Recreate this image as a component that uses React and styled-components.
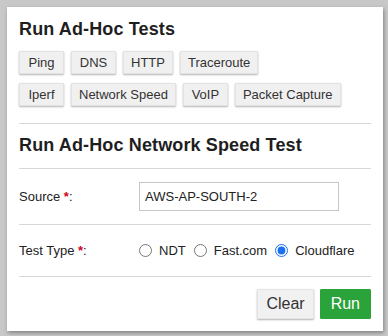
import React, {useState} from 'react';
import styled, {createGlobalStyle} from "styled-components";

const GlobalStyle = createGlobalStyle`
  html, body {
    margin: 0;
    padding: 0;
    background: #c8c8c8;
  }
  body {
    font-family: "Liberation Sans", Arial, Helvetica, sans-serif;
    color: #222;
  }
`;

const testRows = [
    ["Ping", "DNS", "HTTP", "Traceroute"],
    ["Iperf", "Network Speed", "VoIP", "Packet Capture"],
];
const types = ["NDT", "Fast.com", "Cloudflare"];

const App = () => {
    const [testType, setTestType] = useState("Cloudflare");
    const [source, setSource] = useState("AWS-AP-SOUTH-2");

    return (
        <>
            <GlobalStyle/>
            <Page>
                <Panel>
                    <Title>Run Ad-Hoc Tests</Title>
                    <TestGrid>
                        {testRows.map((row, i) => (
                            <TestRow key={i}>
                                {row.map((t) => (
                                    <TestButton key={t}>{t}</TestButton>
                                ))}
                            </TestRow>
                        ))}
                    </TestGrid>
                    <Divider $top={17}/>
                    <Title $top={10}>Run Ad-Hoc Network Speed Test</Title>
                    <Divider $top={12}/>
                    <FormRow $height={55}>
                        <Label>Source <Req>*</Req>:</Label>
                        <TextInput value={source} onChange={(e) => setSource(e.target.value)}/>
                    </FormRow>
                    <Divider/>
                    <FormRow $height={51}>
                        <Label>Test Type <Req>*</Req>:</Label>
                        <Radios>
                            {types.map((t) => (
                                <RadioLabel key={t}>
                                    <input
                                        type="radio"
                                        name="type"
                                        checked={testType === t}
                                        onChange={() => setTestType(t)}
                                    />
                                    {t}
                                </RadioLabel>
                            ))}
                        </Radios>
                    </FormRow>
                    <Divider/>
                    <Footer>
                        <ActionButton>Clear</ActionButton>
                        <ActionButton $primary>Run</ActionButton>
                    </Footer>
                </Panel>
            </Page>
        </>
    );
};

const Page = styled.div`
  padding: 7px;
  width: 388px;
  height: 336px;
  box-sizing: border-box;
`;

const Panel = styled.div`
  width: 376px;
  height: 324px;
  box-sizing: border-box;
  background: #fff;
  padding: 11px 12px 0 12px;
  box-shadow: 1px 2px 4px rgba(0, 0, 0, 0.35);
  display: flex;
  flex-direction: column;
`;

const Title = styled.h2`
  margin: ${(p) => p.$top || 0}px 0 0 0;
  font-size: 18px;
  font-weight: bold;
  line-height: 22px;
  color: #1e1e1e;
  letter-spacing: 0.13px;
`;

const TestGrid = styled.div`
  display: flex;
  flex-direction: column;
  gap: 9px;
  margin-top: 11px;
`;

const TestRow = styled.div`
  display: flex;
  gap: 7px;
`;

const TestButton = styled.button`
  font-family: inherit;
  font-size: 13px;
  height: 23px;
  padding: 0 7px;
  min-width: 45px;
  background: #f0f0f0;
  color: #333;
  border: 1px solid #e2e2e2;
  border-radius: 1px;
  box-shadow: 0 1px 2px rgba(0, 0, 0, 0.3);
  cursor: pointer;
`;

const Divider = styled.hr`
  border: none;
  border-top: 1px solid #d8d8d8;
  margin: ${(p) => p.$top || 0}px 0 0 0;
  width: 100%;
  flex-shrink: 0;
`;

const FormRow = styled.div`
  display: flex;
  align-items: center;
  height: ${(p) => p.$height}px;
  box-sizing: border-box;
`;

const Label = styled.div`
  width: 120px;
  font-size: 13px;
  color: #222;
`;

const Req = styled.span`
  color: #d0021b;
  font-weight: bold;
`;

const TextInput = styled.input`
  width: 200px;
  height: 29px;
  box-sizing: border-box;
  border: 1px solid #c6c6c6;
  padding: 0 5px;
  font-family: inherit;
  font-size: 13px;
  color: #222;
  outline: none;
`;

const Radios = styled.div`
  display: flex;
  align-items: center;
  gap: 8px;
`;

const RadioLabel = styled.label`
  display: flex;
  align-items: center;
  gap: 4px;
  font-size: 13px;
  color: #222;

  input {
    margin: 0 3px 0 0;
    width: 13px;
    height: 13px;
    accent-color: #1a6ff0;
  }
`;

const Footer = styled.div`
  display: flex;
  justify-content: flex-end;
  gap: 6px;
  padding-top: 12px;
`;

const ActionButton = styled.button`
  font-family: inherit;
  font-size: 16px;
  height: 30px;
  padding: 0 ${(p) => (p.$primary ? 10 : 8)}px;
  border-radius: 1px;
  cursor: pointer;
  border: 1px solid ${(p) => (p.$primary ? "#2aa43a" : "#e4e4e4")};
  background: ${(p) => (p.$primary ? "#2aa43a" : "#f1f1f1")};
  color: ${(p) => (p.$primary ? "#fff" : "#333")};
  box-shadow: ${(p) => (p.$primary ? "none" : "0 1px 2px rgba(0, 0, 0, 0.3)")};
`;

export default App;
